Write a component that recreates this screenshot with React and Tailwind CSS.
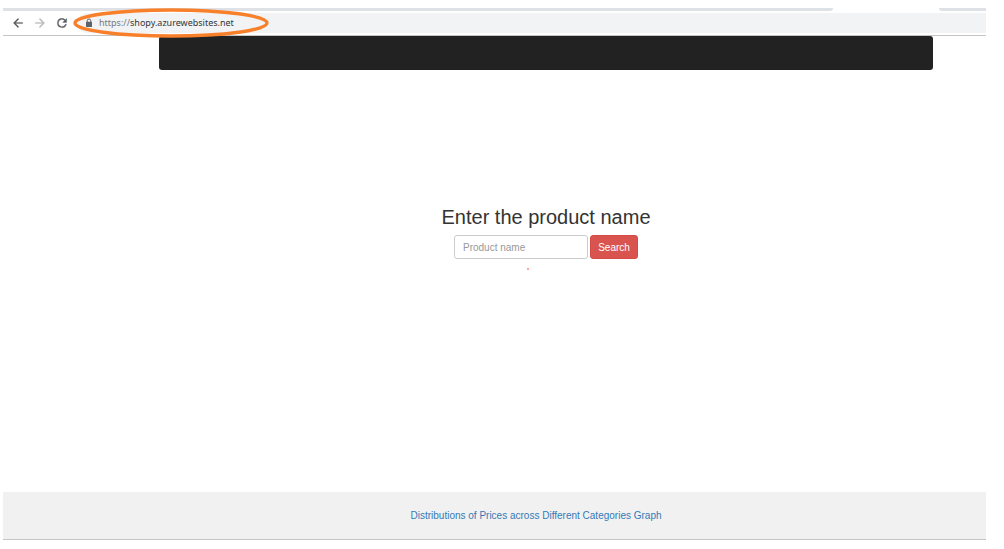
import React from "react";

function BackIcon({ className }) {
  return (
    <svg viewBox="0 0 24 24" className={className} fill="currentColor" stroke="currentColor" strokeWidth="0.5" aria-hidden="true">
      <path d="M20 11H7.83l5.59-5.59L12 4l-8 8 8 8 1.41-1.41L7.83 13H20v-2z" />
    </svg>
  );
}

function ForwardIcon({ className }) {
  return (
    <svg viewBox="0 0 24 24" className={className} fill="currentColor" stroke="currentColor" strokeWidth="0.5" aria-hidden="true">
      <path d="M12 4l-1.41 1.41L16.17 11H4v2h12.17l-5.58 5.59L12 20l8-8z" />
    </svg>
  );
}

function ReloadIcon({ className }) {
  return (
    <svg viewBox="0 0 24 24" className={className} fill="currentColor" stroke="currentColor" strokeWidth="0.5" aria-hidden="true">
      <path d="M17.65 6.35A7.96 7.96 0 0 0 12 4a8 8 0 1 0 7.73 10h-2.08A6 6 0 1 1 12 6c1.66 0 3.14.69 4.22 1.78L13 11h7V4l-2.35 2.35z" />
    </svg>
  );
}

function LockIcon({ className }) {
  return (
    <svg viewBox="0 0 8 10" className={className} aria-hidden="true">
      <path d="M2.2 4.5V2.8a1.8 1.8 0 0 1 3.6 0v1.7" fill="none" stroke="#5f6368" strokeWidth="1" />
      <rect x="1" y="3.8" width="6" height="5.2" rx="0.6" fill="#5f6368" />
    </svg>
  );
}

function BrowserBar() {
  return (
    <header className="border-b border-[#c4c5c7]">
      <div className="flex h-[3px]">
        <div className="flex-1 rounded-br bg-[#dee1e6]" />
        <div className="w-[106px] bg-white" />
        <div className="w-[47px] rounded-bl bg-[#dee1e6]" />
      </div>
      <div className="flex h-6 items-center pl-2">
        <button type="button" aria-label="Back" className="text-[#5a5d61]">
          <BackIcon className="size-[14px]" />
        </button>
        <button type="button" aria-label="Forward" className="ml-2 text-[#b8babd]">
          <ForwardIcon className="size-[14px]" />
        </button>
        <button type="button" aria-label="Reload" className="ml-2 text-[#5a5d61]">
          <ReloadIcon className="size-[14px]" />
        </button>
        <div className="relative ml-2 flex h-5 flex-1 items-center rounded-l-full bg-[#f1f3f4] pl-2">
          <LockIcon className="h-[10px] w-2" />
          <p className="ml-[6px] font-['Noto_Sans',sans-serif] text-[9px] leading-3 text-[#777a7e]">
            https://<span className="text-[#33363a]">shopy.azurewebsites.net</span>
          </p>
          <svg
            viewBox="0 0 196 30"
            className="pointer-events-none absolute -top-[5px] -left-1 h-[30px] w-[196px]"
            aria-hidden="true"
          >
            <ellipse cx="98" cy="15" rx="96" ry="13" fill="none" stroke="#f9802b" strokeWidth="3.4" />
          </svg>
        </div>
      </div>
    </header>
  );
}

export default function App() {
  return (
    <div className="flex min-h-screen flex-col bg-white pt-2 pr-[18px] pb-[9px] pl-[3px] font-['Liberation_Sans',Arial,sans-serif]">
      <BrowserBar />
      <main className="flex-1 pr-[53px] pl-[156px]">
        <nav aria-label="Main" className="h-[34px] rounded-[3px] bg-[#222]" />
        <form className="flex flex-col items-center pt-[133px]" onSubmit={(e) => e.preventDefault()}>
          <label htmlFor="product" className="text-[20px] leading-7 text-[#333]">
            Enter the product name
          </label>
          <div className="mt-1 flex gap-[2px]">
            <input
              id="product"
              type="text"
              placeholder="Product name"
              className="h-6 w-[134px] rounded-[3px] border border-[#ccc] bg-white px-2 text-[10px] text-[#555] placeholder:text-[#999]"
            />
            <button
              type="submit"
              className="h-6 w-12 rounded-[3px] border border-[#d64a46] bg-[#d9534f] text-[10px] text-white"
            >
              Search
            </button>
          </div>
          <div className="mt-[9px] mr-9 size-[2px] bg-[#f9a5a5]" />
        </form>
      </main>
      <footer className="flex h-12 items-center justify-center border-b border-[#c6c6c6] bg-[#f1f1f1] pl-[83px]">
        <a href="#graph" className="text-[10px] leading-4 text-[#337ab7]">
          Distributions of Prices across Different Categories Graph
        </a>
      </footer>
    </div>
  );
}
